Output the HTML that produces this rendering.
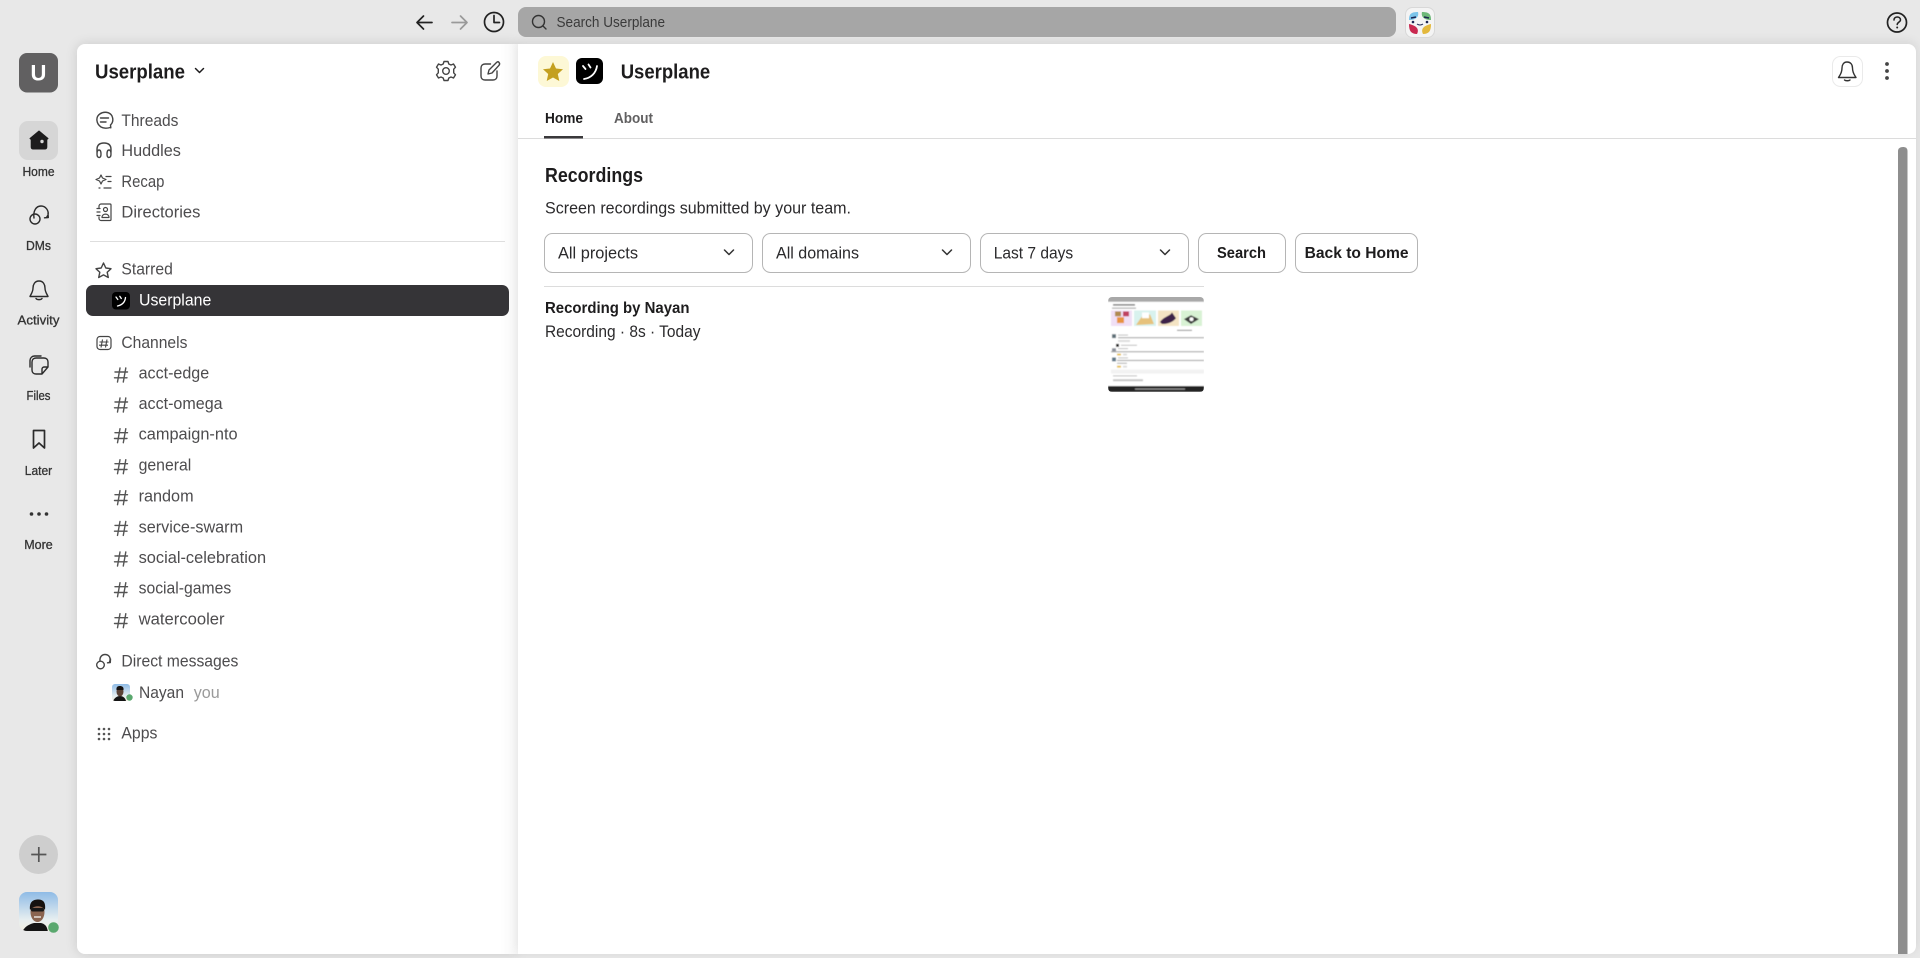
<!DOCTYPE html>
<html><head><meta charset="utf-8"><title>Userplane</title>
<style>
html,body{margin:0;padding:0;width:1920px;height:958px;overflow:hidden;background:#e8e8e8}
.side{position:absolute;left:77px;top:44px;width:441px;height:910px;background:linear-gradient(90deg,#fff 0,#fff 96%,#f6f6f6 100%);border-radius:8px 0 0 8px;box-shadow:0 0 12px rgba(0,0,0,.13)}
.main{position:absolute;left:518px;top:44px;width:1398px;height:910px;background:#fff;border-radius:0 8px 8px 0;box-shadow:0 -2px 11px rgba(0,0,0,.09)}
svg.o{position:absolute;left:0;top:0}
text{font-family:"Liberation Sans",sans-serif;font-size:17px;fill:#4d4c4e}
.b{font-weight:700;fill:#1d1c1d}
.r{font-size:13px;fill:#333;text-anchor:middle;font-weight:400;stroke:#333;stroke-width:.3px}
.m{fill:#2b2a2c}
.i{fill:none;stroke:#444;stroke-width:1.4;stroke-linecap:round;stroke-linejoin:round}
.k{fill:none;stroke:#222;stroke-width:1.7;stroke-linecap:round;stroke-linejoin:round}
.h{fill:none;stroke:#555;stroke-width:1.4;stroke-linecap:round}
</style></head><body>
<div class="side"></div><div class="main"></div>
<svg class="o" width="1920" height="958" viewBox="0 0 1920 958" xmlns="http://www.w3.org/2000/svg">
<defs>
<linearGradient id="sky" x1="0" y1="0" x2="0" y2="1"><stop offset="0" stop-color="#8fbbe6"/><stop offset=".7" stop-color="#e6eef0"/><stop offset="1" stop-color="#f3f0e2"/></linearGradient>
<clipPath id="av"><rect x="19" y="892" width="39" height="39" rx="8"/></clipPath>
<clipPath id="av2"><rect x="112" y="684" width="18" height="17" rx="3"/></clipPath>
<clipPath id="th"><rect x="1108" y="297" width="96" height="95" rx="4"/></clipPath>
<filter id="bl" x="0" y="0" width="1" height="1"><feGaussianBlur stdDeviation=".45"/></filter>
</defs>

<!-- top bar -->
<path class="k" d="M432 22.500H417M423.500 16L417 22.500L423.500 29"/>
<path class="k" style="stroke:#9a9a9a" d="M452 22.500H467M460.500 16L467 22.500L460.500 29"/>
<circle class="k" cx="494" cy="22" r="9.500"/><path class="k" d="M494 15.500V22.500H499.500"/>
<rect x="518" y="7" width="878" height="30" rx="8" fill="#a6a6a6"/>
<circle cx="538.500" cy="21.500" r="6" fill="none" stroke="#333" stroke-width="1.400"/><path d="M543 26L546 29" stroke="#333" stroke-width="1.400" stroke-linecap="round"/>
<text x="556.500" y="27" style="font-size:15px;fill:#3a3a3a" textLength="108.500" lengthAdjust="spacingAndGlyphs">Search Userplane</text>
<rect x="1405.500" y="7.500" width="29" height="30" rx="7" fill="#f4f4f4" stroke="#d8d8d8"/>
<path d="M1409 20C1409 14 1411 12 1418 12C1419 16 1417 20 1409 20Z" fill="#7cc4ea"/>
<path d="M1431 20C1431 14 1429 12 1422 12C1421 16 1423 20 1431 20Z" fill="#6db878"/>
<path d="M1409 24C1409 31 1411 34 1417 34C1419 30 1418 26 1409 24Z" fill="#c9284f"/>
<path d="M1431 24C1431 31 1429 34 1423 34C1421 30 1422 26 1431 24Z" fill="#e3b83c"/>
<path d="M1411 18L1416 17M1424 17L1429 18" stroke="#1b2350" stroke-width="1.500"/><circle cx="1413" cy="22" r="1.300" fill="#1b2350"/><circle cx="1427" cy="22" r="1.300" fill="#1b2350"/><path d="M1417 24Q1420 26 1423 24" stroke="#1b2350" fill="none"/>
<circle class="k" cx="1897" cy="22.500" r="9.500"/><path class="k" style="stroke-width:1.500" d="M1894 20C1894 16 1900.500 16 1900.500 20C1900.500 22 1897.200 22.300 1897.200 24.500"/><circle cx="1897.200" cy="27.500" r="1" fill="#222"/>

<!-- rail -->
<rect x="19" y="53" width="39" height="39.500" rx="8" fill="#616061"/>
<text x="38.500" y="80.500" text-anchor="middle" style="font-size:22px;font-weight:700;fill:#fff">U</text>
<rect x="19" y="121" width="39" height="39" rx="9" fill="#d6d6d6"/>
<path d="M39 131L48 138.500L46.800 139.500V147C46.800 148.200 46 149 44.800 149H33.200C32 149 31.200 148.200 31.200 147V139.500L30 138.500Z" fill="#1d1c1d" stroke="#1d1c1d" stroke-linejoin="round"/><circle cx="42" cy="141.500" r="1.700" fill="#d6d6d6"/>
<text class="r" x="38.500" y="176" textLength="32" lengthAdjust="spacingAndGlyphs">Home</text>
<g transform="translate(0,-3)"><path class="i" style="stroke:#2b2b2b" d="M34 221C33 214 36 209 41 209C46 209 49 214 48 218L46.500 220.500M48 216L48.300 220.500L44.500 220.800"/><circle class="i" style="stroke:#2b2b2b" cx="35" cy="222" r="5"/></g>
<text class="r" x="38.500" y="250" textLength="25" lengthAdjust="spacingAndGlyphs">DMs</text>
<path class="i" style="stroke:#2b2b2b" transform="translate(0,-4)" d="M39 285C34.500 285 33 289 33 292C33 296 31 298 30 300.500H48C47 298 45 296 45 292C45 289 43.500 285 39 285ZM36 302.500C37 304 41 304 42 302.500"/>
<text class="r" x="38.500" y="324.500" textLength="42" lengthAdjust="spacingAndGlyphs">Activity</text>
<path class="i" style="stroke:#2b2b2b" d="M36 358H44C46.500 358 48 359.500 48 362V367L42 374H36C33.500 374 32 372.500 32 370V362C32 359.500 33.500 358 36 358ZM42 374V369C42 368 43 367 44 367H48M30 367V360.500C30 358 32 356 34.500 356H41"/>
<text class="r" x="38.500" y="400" textLength="24" lengthAdjust="spacingAndGlyphs">Files</text>
<path class="i" style="stroke:#2b2b2b;stroke-width:1.700" d="M33.500 430.500H44.500V448L39 443L33.500 448Z"/>
<text class="r" x="38.500" y="475" textLength="27.400" lengthAdjust="spacingAndGlyphs">Later</text>
<circle cx="31.500" cy="514" r="1.800" fill="#333"/><circle cx="39" cy="514" r="1.800" fill="#333"/><circle cx="46.500" cy="514" r="1.800" fill="#333"/>
<text class="r" x="38.500" y="549" textLength="28.400" lengthAdjust="spacingAndGlyphs">More</text>
<circle cx="38.500" cy="854.500" r="19.500" fill="#cecece"/><path d="M38.800 847V862M31.200 854.500H46.400" stroke="#555" stroke-width="1.700"/>
<g clip-path="url(#av)"><rect x="19" y="892" width="39" height="39" fill="url(#sky)"/><path d="M22 932C25 926 30 924 34 923L41 923C45 924 47 926 48 932Z" fill="#141414"/><ellipse cx="37.500" cy="912" rx="7" ry="10" fill="#8a6450"/><path d="M30 910C29 901 34 899.500 38 899.500C43 899.500 46 902 45 910C42 905 34 905 30 910Z" fill="#15110f"/><rect x="31" y="908" width="13" height="3.500" rx="1.500" fill="#181818"/><path d="M34 917H41" stroke="#e6e0da" stroke-width="1.500"/></g>
<circle cx="53.500" cy="927.500" r="5.300" fill="#5aa86e"/>

<!-- sidebar -->
<text class="b" x="95" y="78.500" style="font-size:20px" textLength="90" lengthAdjust="spacingAndGlyphs">Userplane</text>
<path d="M195.500 68.500L199.500 72.500L203.500 68.500" fill="none" stroke="#1d1c1d" stroke-width="1.500" stroke-linecap="round" stroke-linejoin="round"/>
<g class="i" transform="translate(446,71)"><circle r="3.300"/><path d="M-2 -9.500H2L2.800 -7L5 -6L7.500 -7L9.500 -3.800L7.700 -1.800V1.800L9.500 3.800L7.500 7L5 6L2.800 7L2 9.500H-2L-2.800 7L-5 6L-7.500 7L-9.500 3.800L-7.700 1.800V-1.800L-9.500 -3.800L-7.500 -7L-5 -6L-2.800 -7Z"/></g>
<path class="i" d="M490.500 64H485C482.500 64 481 65.500 481 68V76C481 78.500 482.500 80 485 80H493C495.500 80 497 78.500 497 76V71M488 74L489 70L496.500 62.500C497.500 61.500 498.500 61.500 499 62.500C499.800 63.300 499.800 64.300 499 65.300L492 73Z"/>

<path class="i" d="M110 127.500C107.500 128.500 103.500 128.500 101 127C96 123.500 95.500 117 99.800 114C104 111 110 112 112 116C113.500 119.500 113 122.500 110.500 125L110.800 127.800ZM100.500 118H108.500M100.500 122H106"/>
<text x="121.400" y="126" textLength="57" lengthAdjust="spacingAndGlyphs">Threads</text>
<path class="i" transform="translate(0,-1.500)" d="M97 154V151C97 146 100 144.500 104 144.500C108 144.500 111 146 111 151V154M99 151.500C97.500 151.500 97 153 97 155.500C97 158 98 159 99.200 159C100.500 159 101 157.500 101 155.500C101 153 100.200 151.500 99 151.500ZM109 151.500C107.500 151.500 107 153 107 155.500C107 157.500 107.500 159 108.800 159C110 159 111 158 111 155.500C111 153 110.500 151.500 109 151.500Z"/>
<text x="121.400" y="156" textLength="59.500" lengthAdjust="spacingAndGlyphs">Huddles</text>
<path class="i" transform="translate(0,-1.500)" d="M101 176.500L102.500 179.500L106 181L102.500 182.500L101 185.500L99.500 182.500L96 181L99.500 179.500ZM106 178H111M108 183H111M99 189.500H100M104 189.500H111" style="stroke-width:1.200"/>
<text x="121.400" y="187" textLength="43" lengthAdjust="spacingAndGlyphs">Recap</text>
<g transform="translate(0,-1.500)"><path class="i" d="M99 209V207.500C99 206.500 100 205.500 101 205.500H110C110.500 205.500 111 206 111 206.500V221C111 221.500 110.500 222 110 222H101C100 222 99 221 99 220V218.500M97 210H100M97 213.500H100M97 217H100" style="stroke-width:1.200"/><circle class="i" cx="105.500" cy="211" r="2" style="stroke-width:1.200"/><path class="i" d="M102 219C102 214.500 109 214.500 109 219Z" style="stroke-width:1.200"/></g>
<text x="121.400" y="217.700" textLength="79" lengthAdjust="spacingAndGlyphs">Directories</text>
<rect x="90" y="241" width="415" height="1" fill="#dedede"/>
<path class="i" d="M103.500 263L105.800 268L111 268.700L107.200 272.300L108.300 277.500L103.500 274.900L98.700 277.500L99.800 272.300L96 268.700L101.200 268Z"/>
<text x="121.400" y="274.700" textLength="51.400" lengthAdjust="spacingAndGlyphs">Starred</text>
<rect x="86" y="285" width="423" height="31" rx="7" fill="#353437"/>
<rect x="112" y="292" width="18" height="17.500" rx="4" fill="#000"/>
<path d="M116 297L117.800 299.500M119.800 296.300L121.300 298.500M125.500 297.500C125 302 122 305 117.500 306" fill="none" stroke="#fff" stroke-width="1.300" stroke-linecap="round"/>
<text x="139" y="305.700" style="fill:#fff" textLength="72.300" lengthAdjust="spacingAndGlyphs">Userplane</text>

<rect x="97" y="336.500" width="14" height="13" rx="3" fill="none" stroke="#444" stroke-width="1.200"/>
<path d="M102.500 339.500L101 347.500M107 339.500L105.500 347.500M99.500 342H108.500M99 345.200H108" stroke="#444" stroke-width="1.100" fill="none"/>
<text x="121.400" y="347.800" textLength="66" lengthAdjust="spacingAndGlyphs">Channels</text>

<g>
<path class="h" d="M120 368L117.500 382M125.800 368L123.300 382M115 372H127.500M114.500 377.800H127"/>
<path class="h" transform="translate(0,30)" d="M120 368L117.500 382M125.800 368L123.300 382M115 372H127.500M114.500 377.800H127"/>
<path class="h" transform="translate(0,60.700)" d="M120 368L117.500 382M125.800 368L123.300 382M115 372H127.500M114.500 377.800H127"/>
<path class="h" transform="translate(0,91.700)" d="M120 368L117.500 382M125.800 368L123.300 382M115 372H127.500M114.500 377.800H127"/>
<path class="h" transform="translate(0,122.700)" d="M120 368L117.500 382M125.800 368L123.300 382M115 372H127.500M114.500 377.800H127"/>
<path class="h" transform="translate(0,153.400)" d="M120 368L117.500 382M125.800 368L123.300 382M115 372H127.500M114.500 377.800H127"/>
<path class="h" transform="translate(0,184)" d="M120 368L117.500 382M125.800 368L123.300 382M115 372H127.500M114.500 377.800H127"/>
<path class="h" transform="translate(0,214.700)" d="M120 368L117.500 382M125.800 368L123.300 382M115 372H127.500M114.500 377.800H127"/>
<path class="h" transform="translate(0,245.700)" d="M120 368L117.500 382M125.800 368L123.300 382M115 372H127.500M114.500 377.800H127"/>
</g>
<text x="138.600" y="378.700" textLength="70.600" lengthAdjust="spacingAndGlyphs">acct-edge</text>
<text x="138.600" y="408.800" textLength="84" lengthAdjust="spacingAndGlyphs">acct-omega</text>
<text x="138.600" y="439.600" textLength="99" lengthAdjust="spacingAndGlyphs">campaign-nto</text>
<text x="138.600" y="470.700" textLength="52.700" lengthAdjust="spacingAndGlyphs">general</text>
<text x="138.600" y="501.700" textLength="55" lengthAdjust="spacingAndGlyphs">random</text>
<text x="138.600" y="532.300" textLength="104.500" lengthAdjust="spacingAndGlyphs">service-swarm</text>
<text x="138.600" y="562.800" textLength="127.500" lengthAdjust="spacingAndGlyphs">social-celebration</text>
<text x="138.600" y="593.700" textLength="92.600" lengthAdjust="spacingAndGlyphs">social-games</text>
<text x="138.600" y="624.700" textLength="86" lengthAdjust="spacingAndGlyphs">watercooler</text>

<path class="i" d="M100 661C99.500 657 102 654.500 105 654.500C108.500 654.500 110.500 657 110 660.500L109.300 662.500M110.500 659L110.300 662.500L107.500 662.800"/><circle class="i" cx="100.500" cy="665" r="3.800"/>
<text x="121.400" y="666.700" textLength="117" lengthAdjust="spacingAndGlyphs">Direct messages</text>
<g clip-path="url(#av2)"><rect x="112" y="684" width="18" height="17" fill="url(#sky)"/><path d="M113 701C115 697 118 696 120 696C122 696 125 697 126 701Z" fill="#141414"/><ellipse cx="120" cy="691.500" rx="3.500" ry="5" fill="#5a4236"/><path d="M116.500 690C116 686.500 118 686 120 686C122 686 124 687 123.500 690Z" fill="#15110f"/></g>
<circle cx="129.500" cy="697.500" r="3.200" fill="#5aa86e"/>
<text x="139" y="697.800" textLength="45" lengthAdjust="spacingAndGlyphs">Nayan</text>
<text x="193.700" y="697.800" style="fill:#9a9a9a" textLength="26" lengthAdjust="spacingAndGlyphs">you</text>
<g fill="#555"><circle cx="99" cy="729" r="1.300"/><circle cx="104" cy="729" r="1.300"/><circle cx="109" cy="729" r="1.300"/><circle cx="99" cy="734" r="1.300"/><circle cx="104" cy="734" r="1.300"/><circle cx="109" cy="734" r="1.300"/><circle cx="99" cy="739" r="1.300"/><circle cx="104" cy="739" r="1.300"/><circle cx="109" cy="739" r="1.300"/></g>
<text x="121.400" y="738.700" textLength="36" lengthAdjust="spacingAndGlyphs">Apps</text>

<!-- header -->
<rect x="538" y="56" width="31" height="31" rx="8" fill="#fdf8d6"/>
<path d="M553 62L556 68.500L563 69.300L557.800 74L559.300 81L553 77.500L546.700 81L548.200 74L543 69.300L550 68.500Z" fill="#c4a020"/>
<rect x="576" y="58" width="27" height="26" rx="6" fill="#000"/>
<path d="M583 66L585.500 69M588.500 64.500L590.500 67.500M597 66C596 73 591 78 584 79" fill="none" stroke="#fff" stroke-width="1.800" stroke-linecap="round"/>
<text class="b" x="620.700" y="78.500" style="font-size:20px" textLength="89.500" lengthAdjust="spacingAndGlyphs">Userplane</text>
<rect x="1832.500" y="56.500" width="30" height="30" rx="8" fill="#fff" stroke="#eaeaea"/>
<path class="i" style="stroke:#333" transform="translate(0,-2)" d="M1847 64C1843.500 64 1842 67 1842 70C1842 75 1840 77 1838.500 79.500H1856C1854.500 77 1852.500 75 1852.500 70C1852.500 67 1851 64 1847 64ZM1844.500 82C1845.500 83 1849 83 1850 82"/>
<circle cx="1887" cy="64" r="1.900" fill="#444"/><circle cx="1887" cy="71" r="1.900" fill="#444"/><circle cx="1887" cy="78" r="1.900" fill="#444"/>

<text x="545" y="123" style="font-size:15px;font-weight:700;fill:#1d1c1d" textLength="38" lengthAdjust="spacingAndGlyphs">Home</text>
<text x="614" y="123" style="font-size:15px;font-weight:700;fill:#616061" textLength="39" lengthAdjust="spacingAndGlyphs">About</text>
<rect x="518" y="138" width="1398" height="1" fill="#dcdcdc"/>
<rect x="544" y="136" width="39" height="2.500" fill="#3a393b"/>

<text class="b" x="545" y="182" style="font-size:20px" textLength="98" lengthAdjust="spacingAndGlyphs">Recordings</text>
<text class="m" x="545" y="213.500" textLength="306" lengthAdjust="spacingAndGlyphs">Screen recordings submitted by your team.</text>

<g fill="#fff" stroke="#b5b5b5" stroke-width="1">
<rect x="544.500" y="233.500" width="208" height="39" rx="8"/>
<rect x="762.500" y="233.500" width="208" height="39" rx="8"/>
<rect x="980.500" y="233.500" width="208" height="39" rx="8"/>
<rect x="1198.500" y="233.500" width="87" height="39" rx="8"/>
<rect x="1295.500" y="233.500" width="122" height="39" rx="8"/>
</g>
<text class="m" x="558" y="258.500" textLength="80" lengthAdjust="spacingAndGlyphs">All projects</text>
<text class="m" x="776" y="258.500" textLength="83" lengthAdjust="spacingAndGlyphs">All domains</text>
<text class="m" x="993.700" y="258.500" textLength="79.500" lengthAdjust="spacingAndGlyphs">Last 7 days</text>
<g fill="none" stroke="#333" stroke-width="1.500" stroke-linecap="round" stroke-linejoin="round">
<path d="M724.500 250L729 254.500L733.500 250"/><path d="M942.500 250L947 254.500L951.500 250"/><path d="M1160.500 250L1165 254.500L1169.500 250"/>
</g>
<text class="b" x="1217" y="258" style="font-size:16px" textLength="49" lengthAdjust="spacingAndGlyphs">Search</text>
<text class="b" x="1304.600" y="258" style="font-size:16px" textLength="104" lengthAdjust="spacingAndGlyphs">Back to Home</text>
<rect x="544" y="286" width="660" height="1" fill="#dcdcdc"/>
<text class="b" x="545" y="313" style="font-size:16px" textLength="144.500" lengthAdjust="spacingAndGlyphs">Recording by Nayan</text>
<text class="m" x="545" y="337" textLength="155.500" lengthAdjust="spacingAndGlyphs">Recording · 8s · Today</text>

<!-- thumbnail -->
<g clip-path="url(#th)">
<g transform="translate(0,6.200) scale(1,.969)" filter="url(#bl)">
<rect x="1108" y="296" width="96" height="102" fill="#fff"/>
<rect x="1108" y="296" width="96" height="9" fill="#a8a8a8"/>
<rect x="1113" y="307.500" width="22" height="1.500" fill="#777"/>
<rect x="1112" y="311" width="24" height="1.200" fill="#aaa"/>
<rect x="1111" y="314" width="21" height="16" fill="#f0dff5"/><rect x="1115" y="315" width="6" height="5" fill="#b08a50"/><rect x="1123" y="315" width="6" height="5" fill="#c04060"/><rect x="1117" y="321" width="7" height="6" fill="#e8933f"/>
<rect x="1134" y="314" width="22" height="16" fill="#d8f2ee"/><path d="M1136 329L1142 320L1150 318L1154 328Z" fill="#e6c27c"/><rect x="1142" y="316" width="7" height="6" fill="#fff"/>
<rect x="1158" y="314" width="21" height="16" fill="#f4e4c4"/><path d="M1160 326C1164 320 1170 320 1172 316L1176 322C1172 327 1166 328 1162 328Z" fill="#3d2248"/>
<rect x="1181" y="314" width="21" height="16" fill="#d8f2d4"/><path d="M1191 319L1199 323L1191 328L1184 323Z" fill="#3a3a3a"/><circle cx="1191.500" cy="323" r="2" fill="#fff"/>
<rect x="1177" y="334" width="15" height="1" fill="#888"/>
<rect x="1112" y="338.500" width="4" height="4" fill="#5f6f78"/><rect x="1118" y="339" width="10" height=".8" fill="#aaa"/><rect x="1118" y="341.500" width="86" height="1.200" fill="#aaa"/>
<rect x="1118" y="344.500" width="12" height="2" fill="#ddd"/>
<rect x="1116" y="348.500" width="3" height="3" fill="#222"/><rect x="1121" y="349.500" width="16" height=".8" fill="#aaa"/>
<rect x="1112" y="353" width="4" height="4" fill="#8a8f99"/><rect x="1118" y="353" width="10" height=".8" fill="#aaa"/><rect x="1111" y="356" width="93" height="1.200" fill="#aaa"/>
<rect x="1117" y="358.500" width="4" height="2" fill="#e6c050"/><rect x="1123" y="358.500" width="4" height="2" fill="#ddd"/>
<rect x="1112" y="362.500" width="4" height="4" fill="#5f7888"/><rect x="1118" y="362.500" width="10" height=".8" fill="#aaa"/><rect x="1117" y="365" width="87" height="1.200" fill="#aaa"/><rect x="1117" y="368" width="10" height="1" fill="#aaa"/>
<rect x="1117" y="371" width="4" height="2" fill="#e6c050"/><rect x="1123" y="371" width="4" height="2" fill="#ddd"/>
<rect x="1111" y="375" width="93" height="4" fill="#f2f2f2"/>
<rect x="1113" y="381" width="24" height="1" fill="#bbb"/>
<rect x="1113" y="385" width="30" height="2" fill="#c4c4c4"/>
<rect x="1108" y="392" width="96" height="6" fill="#222"/><rect x="1135" y="394.500" width="50" height="1.200" fill="#999"/>
</g></g>

<!-- scrollbar -->
<path d="M1898 151C1898 148.500 1900 147 1903 147C1906 147 1907.500 148.500 1907.500 151V954H1898Z" fill="#8e8e8e"/>
</svg>
</body></html>
